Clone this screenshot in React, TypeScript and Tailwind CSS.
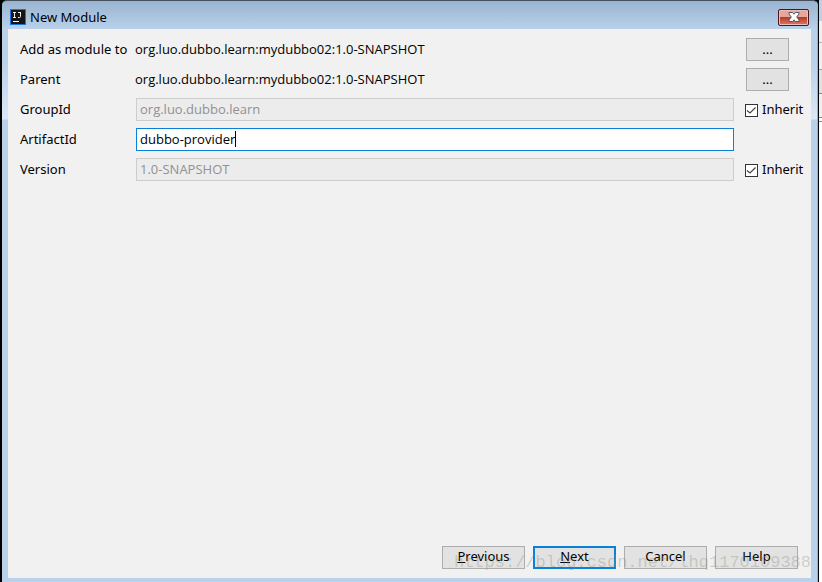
import React from 'react'

const Logo = () => (
  <svg width="16" height="16" viewBox="0 0 16 16" aria-hidden="true">
    <rect width="16" height="16" fill="#1b72e0" />
    <rect x="1" y="1" width="14" height="14" fill="#151515" />
    <path d="M3 3.500h3M4.500 3.500v5M3 8.500h3M8 3.500h3M10.500 3.500v4q0 1-1 1H8" fill="none" stroke="#f0f0f0" strokeWidth="1" />
    <path d="M3 12.500h6" stroke="#fff" strokeWidth="1" />
  </svg>
)

const CloseButton = () => (
  <button
    type="button"
    aria-label="Close"
    className="flex h-[17px] w-[31px] items-center justify-center rounded-[2px] border border-[#4a1420] bg-linear-to-b from-[#e8a59b] from-45% via-[#b93a26] via-50% to-[#d67a68] shadow-[inset_0_0_0_1px_#eebdb5]"
  >
    <svg width="12" height="10" viewBox="0 0 12 10">
      <path
        d="M1 .5h3.500L6 2.200 7.500 .5H11V2L8.700 5 11 8v1.500H7.500L6 7.800 4.500 9.500H1V8l2.300-3L1 2z"
        fill="#fff"
        stroke="#535666"
        strokeWidth="1"
      />
    </svg>
  </button>
)

const BrowseRow = ({ label, value }: { label: string; value: string }) => (
  <div className="flex h-[30px] items-center">
    <span className="w-[115px] shrink-0 whitespace-nowrap">{label}</span>
    <span className="flex-1 font-['Open_Sans',sans-serif]">{value}</span>
    <button
      type="button"
      aria-label={`Choose ${label}`}
      className="mr-[10px] h-[23px] w-[43px] border border-[#adadad] bg-[#e2e2e2] leading-4"
    >
      ...
    </button>
  </div>
)

type FieldRowProps = { id: string; label: string; value: string; inherit?: boolean }

const FieldRow = ({ id, label, value, inherit }: FieldRowProps) => (
  <div className="flex h-[30px] items-center">
    <label htmlFor={id} className="w-[116px] shrink-0">{label}</label>
    {inherit ? (
      <input
        id={id}
        disabled
        defaultValue={value}
        className="h-[23px] min-w-0 flex-1 border border-[#cdcdcd] bg-[#ececec] px-[3px] font-['Open_Sans',sans-serif] text-[#919191]"
      />
    ) : (
      <div className="flex h-[23px] min-w-0 flex-1 items-center border border-[#0b80d8] bg-white pl-[3px]">
        <input
          id={id}
          defaultValue={value}
          className="field-sizing-content h-[21px] max-w-full bg-transparent font-['Open_Sans',sans-serif] outline-none"
        />
        <span className="h-4 w-px bg-black" />
      </div>
    )}
    <div className="w-[65px] shrink-0 pl-[11px]">
      {inherit && (
        <label className="flex items-center gap-1 whitespace-nowrap">
          <span className="grid shrink-0 pt-[2px]">
            <input
              type="checkbox"
              defaultChecked
              aria-label={`Inherit ${label}`}
              className="peer col-start-1 row-start-1 size-[13px] appearance-none border border-[#333] bg-white"
            />
            <svg
              width="13"
              height="13"
              viewBox="0 0 13 13"
              className="pointer-events-none invisible col-start-1 row-start-1 peer-checked:visible"
            >
              <path d="M2 6.500l3 2.500 5.500-5.500" fill="none" stroke="#444" strokeWidth="1.200" />
            </svg>
          </span>
          Inherit
        </label>
      )}
    </div>
  </div>
)

const DialogButton = ({ children, primary }: { children: React.ReactNode; primary?: boolean }) => (
  <button
    type="button"
    className={`h-[23px] w-[83px] bg-[#e2e2e2] pb-[3px] leading-4 ${primary ? 'border-2 border-[#0b80d8]' : 'border border-[#adadad]'}`}
  >
    {children}
  </button>
)

// Sliver of the editor window behind the dialog
const Backdrop = () => (
  <div className="flex w-[3px] shrink-0 flex-col bg-white">
    <div className="h-[21px] bg-[#c3d0e4]" />
    <div className="h-[22px] border-b border-[#b0b0b0] bg-[#f0f0f0]" />
    <div className="h-[27px] border-b border-[#a0a0a0] bg-[#f0f0f0]" />
    <div className="h-6 border-b border-[#888] bg-[#e2e2e2]" />
    <div className="h-6 border-b border-[#888] bg-[#f0f0f0]" />
    <div className="h-1 border-b border-[#888]" />
  </div>
)

export default function App() {
  return (
    <div className="flex min-h-screen bg-black pl-[2px] font-['Noto_Sans',sans-serif] text-[13px] leading-5 text-black">
      <div className="mr-px flex min-w-0 flex-1 flex-col rounded-t-[5px] border-t border-r border-t-[#45505c] border-r-[#4dd0ea] bg-[#b9d1ea] bg-[linear-gradient(#99b4d1,#b9d1ea_28px,#b9d1ea_60px,#dce8f5_118px,#b9d1ea_119px)] px-[6px] pb-1">
        <header className="flex h-7 items-center pt-1 pr-[2px] pl-[2px]">
          <Logo />
          <h1 className="ml-1 flex-1">New Module</h1>
          <CloseButton />
        </header>
        <main className="flex flex-1 flex-col bg-[#f1f1f1] px-3 pt-[5px]">
          <form className="flex flex-1 flex-col">
            <BrowseRow label="Add as module to" value="org.luo.dubbo.learn:mydubbo02:1.0-SNAPSHOT" />
            <BrowseRow label="Parent" value="org.luo.dubbo.learn:mydubbo02:1.0-SNAPSHOT" />
            <FieldRow id="group-id" label="GroupId" value="org.luo.dubbo.learn" inherit />
            <FieldRow id="artifact-id" label="ArtifactId" value="dubbo-provider" />
            <FieldRow id="version" label="Version" value="1.0-SNAPSHOT" inherit />
            <div className="relative mt-auto flex justify-end gap-2 pr-px pb-[9px]">
              <DialogButton><u>P</u>revious</DialogButton>
              <DialogButton primary><u>N</u>ext</DialogButton>
              <DialogButton>Cancel</DialogButton>
              <DialogButton>Help</DialogButton>
              <span className="pointer-events-none absolute -right-3 bottom-[5px] font-['Liberation_Mono',monospace] text-[17px] leading-5 whitespace-nowrap text-[#8c8c7c]/35">
                https://blog.csdn.net/lhq1170109388
              </span>
            </div>
          </form>
        </main>
      </div>
      <Backdrop />
    </div>
  )
}
